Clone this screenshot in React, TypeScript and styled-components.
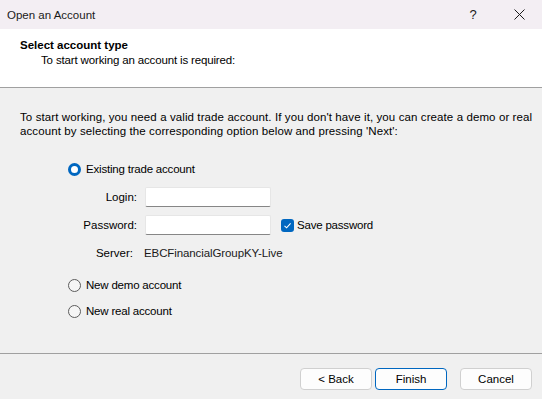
import React from "react";
import styled, {createGlobalStyle} from "styled-components";

const GlobalStyle = createGlobalStyle`
  html, body {
    margin: 0;
    padding: 0;
    background: #f0f0f0;
  }

  body {
    font-family: "Liberation Sans", Arial, sans-serif;
    font-size: 11.5px;
    color: #000;
  }
`

const Window = styled.div`
  width: 542px;
  height: 399px;
  display: flex;
  flex-direction: column;
  background-color: #f0f0f0;
  overflow: hidden;
`

const TitleBar = styled.div`
  height: 29px;
  display: flex;
  align-items: center;
  background-color: #f3eef3;
  padding-left: 7px;
`

const Caption = styled.div`
  flex: 1;
  color: #1a1a1a;
`

const TitleButton = styled.div`
  width: 46px;
  height: 29px;
  display: flex;
  align-items: center;
  justify-content: center;
  color: #1a1a1a;
  font-size: 13px;
`

const Header = styled.div`
  height: 59px;
  box-sizing: border-box;
  background-color: #fff;
  border-bottom: 1px solid #a0a0a0;
  padding: 9px 0 0 20px;
`

const HeaderTitle = styled.div`
  font-weight: 700;
  line-height: 15px;
`

const HeaderSub = styled.div`
  padding-left: 21px;
  line-height: 15px;
  letter-spacing: -0.15px;
`

const Body = styled.div`
  height: 266px;
  box-sizing: border-box;
  padding: 22px 4px 0 20px;
  border-bottom: 1px solid #a0a0a0;
`

const Intro = styled.p`
  margin: 0;
  line-height: 14px;
  white-space: pre;
  letter-spacing: 0.1px;
`

const Options = styled.div`
  margin: 23px 0 0 48px;
  display: flex;
  flex-direction: column;
`

const RadioRow = styled.label<{ $top: number }>`
  display: flex;
  align-items: center;
  gap: 5px;
  height: 16px;
  margin-top: ${p => p.$top}px;
  letter-spacing: -0.2px;
`

const RadioDot = styled.span<{ $checked?: boolean }>`
  width: 13px;
  height: 13px;
  box-sizing: border-box;
  border-radius: 50%;
  border: ${p => p.$checked ? "3.5px solid #0067c0" : "1px solid #5c5c5c"};
  background-color: ${p => p.$checked ? "#fff" : "#f5f5f5"};
`

const Fields = styled.div`
  display: grid;
  grid-template-columns: 69px 126px auto;
  column-gap: 8px;
  row-gap: 8px;
  margin-top: 10px;
  align-items: center;
`

const FieldLabel = styled.div<{ $shift?: number }>`
  text-align: right;
  height: 20px;
  line-height: 20px;
  padding-right: ${p => p.$shift || 0}px;
`

const TextBox = styled.div`
  height: 20px;
  box-sizing: border-box;
  background-color: #fff;
  border: 1px solid #e6e6e6;
  border-bottom: 1px solid #868686;
  border-radius: 2px;
`

const CheckRow = styled.div`
  display: flex;
  align-items: center;
  gap: 3px;
  margin-left: 2px;
  letter-spacing: -0.2px;
`

const CheckBox = styled.span`
  width: 13px;
  height: 13px;
  border-radius: 3px;
  background-color: #0067c0;
  display: flex;
  align-items: center;
  justify-content: center;
`

const ServerValue = styled.div`
  grid-column: 2 / 4;
  height: 20px;
  line-height: 20px;
  margin-left: -1px;
  color: #1a1a1a;
  letter-spacing: -0.1px;
`

const Footer = styled.div`
  flex: 1;
  display: flex;
  justify-content: flex-end;
  align-items: flex-start;
  padding: 14px 10px 0 0;
`

const Button = styled.div<{ $primary?: boolean; $gap?: number }>`
  width: 72px;
  height: 22px;
  box-sizing: border-box;
  display: flex;
  align-items: center;
  justify-content: center;
  background-color: #fdfdfd;
  border: 1px solid ${p => p.$primary ? "#0067c0" : "#d0d0d0"};
  border-radius: 4px;
  margin-left: ${p => p.$gap || 0}px;
`

const Open: React.FC = () => {
    return (
        <>
            <GlobalStyle/>
            <Window>
                <TitleBar>
                    <Caption>Open an Account</Caption>
                    <TitleButton>?</TitleButton>
                    <TitleButton>
                        <svg width="11" height="11" viewBox="0 0 11 11">
                            <path d="M0.5 0.5 L10.5 10.5 M10.5 0.5 L0.5 10.5" stroke="#1a1a1a" strokeWidth="1"/>
                        </svg>
                    </TitleButton>
                </TitleBar>
                <Header>
                    <HeaderTitle>Select account type</HeaderTitle>
                    <HeaderSub>To start working an account is required:</HeaderSub>
                </Header>
                <Body>
                    <Intro>
                        {"To start working, you need a valid trade account. If you don't have it, you can create a demo or real\naccount by selecting the corresponding option below and pressing 'Next':"}
                    </Intro>
                    <Options>
                        <RadioRow $top={0}>
                            <RadioDot $checked/>
                            Existing trade account
                        </RadioRow>
                        <Fields>
                            <FieldLabel>Login:</FieldLabel>
                            <TextBox/>
                            <div/>
                            <FieldLabel>Password:</FieldLabel>
                            <TextBox/>
                            <CheckRow>
                                <CheckBox>
                                    <svg width="9" height="9" viewBox="0 0 9 9">
                                        <path d="M1.5 4.8 L3.6 6.8 L7.6 2.3" fill="none" stroke="#fff" strokeWidth="1.1"/>
                                    </svg>
                                </CheckBox>
                                Save password
                            </CheckRow>
                            <FieldLabel $shift={4}>Server:</FieldLabel>
                            <ServerValue>EBCFinancialGroupKY-Live</ServerValue>
                        </Fields>
                        <RadioRow $top={14}>
                            <RadioDot/>
                            New demo account
                        </RadioRow>
                        <RadioRow $top={10}>
                            <RadioDot/>
                            New real account
                        </RadioRow>
                    </Options>
                </Body>
                <Footer>
                    <Button>&lt; Back</Button>
                    <Button $primary $gap={3}>Finish</Button>
                    <Button $gap={13}>Cancel</Button>
                </Footer>
            </Window>
        </>
    )
}

export default Open
